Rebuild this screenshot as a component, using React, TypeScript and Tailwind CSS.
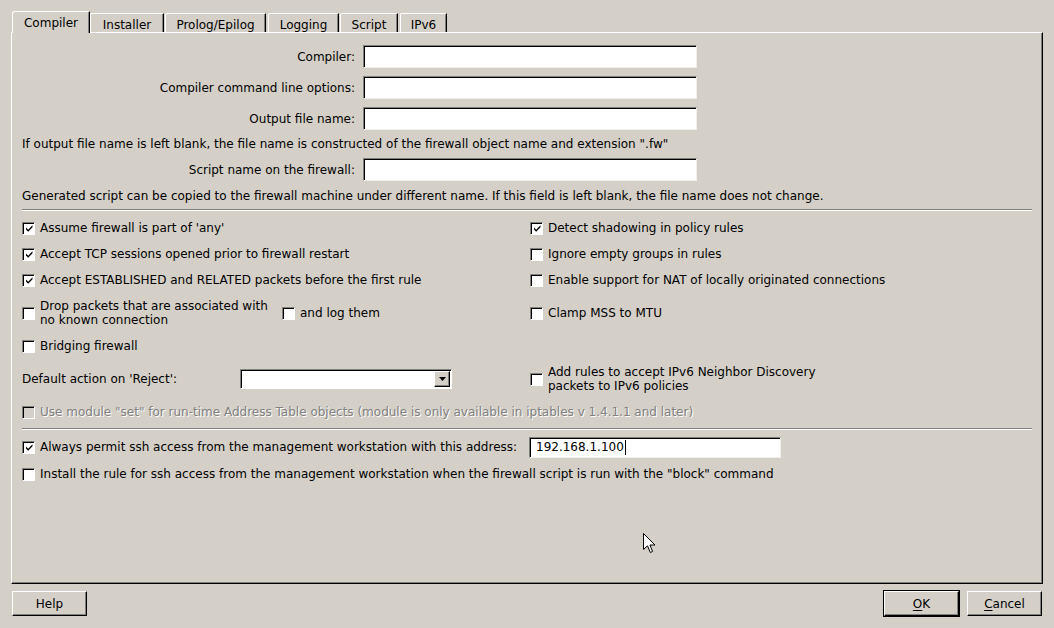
import type { ReactNode } from 'react'

const tabs = [
  { label: 'Compiler', cls: 'w-[78px]', active: true },
  { label: 'Installer', cls: 'w-[74px]' },
  { label: 'Prolog/Epilog', cls: 'ml-[1px] w-[101px]' },
  { label: 'Logging', cls: 'ml-[2px] w-[71px]' },
  { label: 'Script', cls: 'ml-[1px] w-[58px]' },
  { label: 'IPv6', cls: 'ml-[2px] w-[47px]' },
]

function CheckBox({ checked = false, disabled = false }: { checked?: boolean; disabled?: boolean }) {
  return (
    <span
      className={
        'box-border flex h-[13px] w-[13px] shrink-0 items-center justify-center border border-t-[#808080] border-l-[#808080] border-r-white border-b-white shadow-[inset_1px_1px_0_#000] ' +
        (disabled ? 'bg-[#d4d0c8]' : 'bg-white')
      }
    >
      {checked ? (
        <svg width="9" height="9" viewBox="0 0 9 9" className="ml-px mt-px">
          <path d="M1 3.5 L3.2 5.8 L7.5 1.2 L7.5 3.2 L3.2 7.8 L1 5.5 Z" fill="#000" />
        </svg>
      ) : null}
    </span>
  )
}

function Check({ checked, children, disabled }: { checked?: boolean; children: ReactNode; disabled?: boolean }) {
  return (
    <div className="flex items-center gap-[5px]">
      <CheckBox checked={checked} disabled={disabled} />
      <span className={disabled ? 'text-[#808080] [text-shadow:1px_1px_0_#fff]' : ''}>{children}</span>
    </div>
  )
}

function TextField({ value, w, h }: { value?: string; w: string; h: string }) {
  return (
    <div
      className={`box-border flex items-center border border-t-[#808080] border-l-[#808080] border-r-[#f2f0ec] border-b-[#f2f0ec] bg-white pl-[6px] shadow-[inset_1px_1px_0_#000] ${w} ${h}`}
    >
      {value ? (
        <span className="flex items-center">
          {value}
          <span className="ml-px h-[15px] w-px bg-black" />
        </span>
      ) : null}
    </div>
  )
}

function FormRow({ label, className }: { label: string; className: string }) {
  return (
    <div className={`flex items-center ${className}`}>
      <div className="w-[344px] pr-px text-right">{label}</div>
      <div className="ml-[7px]">
        <TextField w="w-[334px]" h="h-[23px]" />
      </div>
    </div>
  )
}

function Button({ children, isDefault }: { children: ReactNode; isDefault?: boolean }) {
  const inner = (
    <div className="box-border flex h-[25px] w-[75px] items-center justify-center border border-t-white border-l-white border-r-black border-b-black shadow-[inset_-1px_-1px_0_#808080]">
      {children}
    </div>
  )
  if (isDefault) {
    return <div className="border border-black">{inner}</div>
  }
  return inner
}

function Separator({ className }: { className: string }) {
  return <div className={`ml-[10px] h-[2px] w-[1010px] border-t border-b border-t-[#808080] border-b-white ${className}`} />
}

export default function App() {
  return (
    <div className="relative flex h-[628px] w-[1054px] flex-col overflow-hidden bg-[#d4d0c8] px-[11px] pt-[11px] text-[12px] leading-[16px] text-black [font-family:'DejaVu_Sans',sans-serif]">
      {/* tabs */}
      <div className="flex h-[21px] items-end pl-px">
        {tabs.map((t) =>
          t.active ? (
            <div
              key={t.label}
              className={`relative z-10 -mb-px box-border flex h-[22px] items-start justify-center rounded-tl-[3px] border-t border-l border-r border-t-white border-l-white border-r-black bg-[#d4d0c8] pt-[3px] shadow-[inset_-1px_0_0_#808080] ${t.cls}`}
            >
              {t.label}
            </div>
          ) : (
            <div
              key={t.label}
              className={`box-border flex h-[19px] items-start justify-center rounded-tl-[2px] border-t border-l border-r border-t-white border-l-white border-r-black pt-[3px] shadow-[inset_-1px_0_0_#808080] ${t.cls}`}
            >
              {t.label}
            </div>
          ),
        )}
      </div>

      {/* pane */}
      <div className="box-border flex h-[552px] w-[1032px] flex-col border border-t-white border-l-white border-r-black border-b-black pt-[12px] shadow-[inset_-1px_-1px_0_#808080]">
        <FormRow label="Compiler:" className="" />
        <FormRow label="Compiler command line options:" className="mt-[8px]" />
        <FormRow label="Output file name:" className="mt-[8px]" />
        <div className="ml-[10px] mt-[6px]">
          If output file name is left blank, the file name is constructed of the firewall object name and extension ".fw"
        </div>
        <FormRow label="Script name on the firewall:" className="mt-[6px]" />
        <div className="ml-[10px] mt-[7px]">
          Generated script can be copied to the firewall machine under different name. If this field is left blank, the file name does not change.
        </div>
        <Separator className="mt-[5px]" />

        <div className="ml-[10px] mt-[4px] grid grid-cols-[508px_1fr]">
          <div className="flex h-[26px] items-center">
            <Check checked>Assume firewall is part of 'any'</Check>
          </div>
          <div className="flex h-[26px] items-center">
            <Check checked>Detect shadowing in policy rules</Check>
          </div>

          <div className="flex h-[26px] items-center">
            <Check checked>Accept TCP sessions opened prior to firewall restart</Check>
          </div>
          <div className="flex h-[26px] items-center">
            <Check>Ignore empty groups in rules</Check>
          </div>

          <div className="flex h-[26px] items-center">
            <Check checked>Accept ESTABLISHED and RELATED packets before the first rule</Check>
          </div>
          <div className="flex h-[26px] items-center">
            <Check>Enable support for NAT of locally originated connections</Check>
          </div>

          <div className="flex h-[40px] items-center">
            <div className="flex w-[260px] items-center gap-[5px] leading-[14px]">
              <CheckBox />
              <span>
                Drop packets that are associated with
                <br />
                no known connection
              </span>
            </div>
            <Check>and log them</Check>
          </div>
          <div className="flex h-[40px] items-center">
            <Check>Clamp MSS to MTU</Check>
          </div>

          <div className="flex h-[26px] items-center">
            <Check>Bridging firewall</Check>
          </div>
          <div className="h-[26px]" />

          <div className="flex h-[40px] items-center">
            <span className="w-[218px]">Default action on 'Reject':</span>
            <div className="box-border flex h-[20px] w-[212px] items-center justify-end border border-t-[#808080] border-l-[#808080] border-r-white border-b-white bg-white pr-px shadow-[inset_1px_1px_0_#000]">
              <div className="box-border flex h-[16px] w-[16px] items-center justify-center border border-t-white border-l-white border-r-black border-b-black bg-[#d4d0c8] shadow-[inset_-1px_-1px_0_#808080]">
                <svg width="7" height="4" viewBox="0 0 7 4">
                  <path d="M0 0 H7 L3.5 4 Z" fill="#000" />
                </svg>
              </div>
            </div>
          </div>
          <div className="flex h-[40px] items-center">
            <div className="flex items-center gap-[5px] leading-[14px]">
              <CheckBox />
              <span>
                Add rules to accept IPv6 Neighbor Discovery
                <br />
                packets to IPv6 policies
              </span>
            </div>
          </div>

          <div className="col-span-2 flex h-[26px] items-center">
            <Check disabled>
              Use module "set" for run-time Address Table objects (module is only available in iptables v 1.4.1.1 and later)
            </Check>
          </div>
        </div>

        <Separator className="mt-[3px]" />

        <div className="ml-[10px] mt-[4px] flex h-[26px] items-center">
          <CheckBox checked />
          <span className="ml-[5px] w-[489px]">Always permit ssh access from the management workstation with this address:</span>
          <TextField value="192.168.1.100" w="w-[252px]" h="h-[21px]" />
        </div>
        <div className="ml-[10px] mt-px flex h-[26px] items-center">
          <Check>Install the rule for ssh access from the management workstation when the firewall script is run with the "block" command</Check>
        </div>
      </div>

      {/* buttons */}
      <div className="mt-[6px] flex h-[27px] items-center pl-px pr-px">
        <Button>Help</Button>
        <div className="ml-auto flex items-center gap-[7px]">
          <Button isDefault>
            <span>
              <span className="underline underline-offset-2">O</span>K
            </span>
          </Button>
          <Button>
            <span>
              <span className="underline underline-offset-2">C</span>ancel
            </span>
          </Button>
        </div>
      </div>

      {/* mouse pointer */}
      <svg className="absolute left-[643px] top-[533px]" width="13" height="21" viewBox="0 0 13 21">
        <path d="M0.5 0.5 V16.5 L4.5 12.8 L7.3 19.5 L9.6 18.5 L6.9 12 H12 Z" fill="#fff" stroke="#000" strokeWidth="1" />
      </svg>
    </div>
  )
}
